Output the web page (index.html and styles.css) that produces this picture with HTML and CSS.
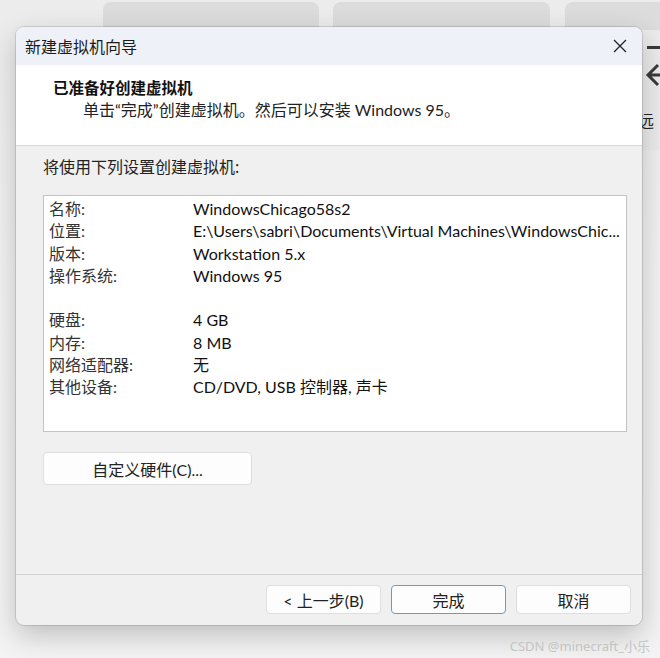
FILE: index.html
```html
<!DOCTYPE html>
<html lang="zh">
<head>
<meta charset="utf-8">
<link rel="stylesheet" href="styles.css">
</head>
<body>
<div class="desktop">
  <div class="bgcard c1"></div>
  <div class="bgcard c2"></div>
  <div class="bgcard c3"></div>
  <div class="bgside">
    <div class="minus"></div>
    <svg class="arrow" width="30" height="30" viewBox="0 0 30 30"><path d="M30 15H6M16 5L6 15l10 10" fill="none" stroke="#3a3a3a" stroke-width="3"/></svg>
    <div class="sidetext">远</div>
  </div>

  <div class="dialog">
    <div class="titlebar">
      <span class="title">新建虚拟机向导</span>
      <svg class="close" width="14" height="14" viewBox="0 0 14 14"><path d="M1 1L13 13M13 1L1 13" stroke="#222" stroke-width="1.3"/></svg>
    </div>
    <div class="header">
      <div class="h-title">已准备好创建虚拟机</div>
      <div class="h-sub">单击“完成”创建虚拟机。然后可以安装 Windows 95。</div>
    </div>
    <div class="content">
      <div class="intro">将使用下列设置创建虚拟机:</div>
      <div class="listbox">
        <div class="row"><span class="k">名称:</span><span class="v">WindowsChicago58s2</span></div>
        <div class="row"><span class="k">位置:</span><span class="v">E:\Users\sabri\Documents\Virtual Machines\WindowsChic...</span></div>
        <div class="row"><span class="k">版本:</span><span class="v">Workstation 5.x</span></div>
        <div class="row"><span class="k">操作系统:</span><span class="v">Windows 95</span></div>
        <div class="row"><span class="k">&nbsp;</span><span class="v"></span></div>
        <div class="row"><span class="k">硬盘:</span><span class="v">4 GB</span></div>
        <div class="row"><span class="k">内存:</span><span class="v">8 MB</span></div>
        <div class="row"><span class="k">网络适配器:</span><span class="v">无</span></div>
        <div class="row"><span class="k">其他设备:</span><span class="v">CD/DVD, USB 控制器, 声卡</span></div>
      </div>
      <div class="btn custom">自定义硬件(C)...</div>
    </div>
    <div class="footer">
      <div class="btn fbtn">&lt; 上一步(B)</div>
      <div class="btn fbtn primary">完成</div>
      <div class="btn fbtn">取消</div>
    </div>
  </div>

  <div class="watermark">CSDN @minecraft_小乐</div>
</div>
</body>
</html>
```
FILE: styles.css
```css
html, body {
  margin: 0;
  padding: 0;
}
body {
  width: 660px;
  height: 658px;
  overflow: hidden;
  background: #f1f1f1;
  font-family: "Noto Sans", "Noto Sans CJK SC", sans-serif;
  color: #1b1b1b;
}
.desktop {
  position: relative;
  width: 660px;
  height: 658px;
  background: linear-gradient(#ececec, #f2f2f2 40%, #f3f3f3);
}
.bgcard {
  position: absolute;
  top: 2px;
  height: 60px;
  border-radius: 8px;
  background: #dcdcdc;
}
.c1 { left: 103px; width: 216px; }
.c2 { left: 333px; width: 217px; }
.c3 { left: 565px; width: 120px; }
.bgside {
  position: absolute;
  left: 642px;
  top: 30px;
  width: 30px;
  height: 120px;
  background: #ebebeb;
}
.minus {
  position: absolute;
  left: 5px;
  top: 16px;
  width: 16px;
  height: 3px;
  background: #3a3a3a;
}
.arrow {
  position: absolute;
  left: 0px;
  top: 30px;
}
.sidetext {
  position: absolute;
  left: -4px;
  top: 78px;
  font-size: 16px;
  font-family: "Noto Sans CJK SC", sans-serif;
  color: #222;
}
.dialog {
  position: absolute;
  left: 16px;
  top: 27px;
  width: 626px;
  height: 598px;
  border-radius: 8px;
  overflow: hidden;
  background: #f0f0f0;
  box-shadow: 0 0 0 1px rgba(0,0,0,0.12), 0 10px 28px rgba(0,0,0,0.22);
  display: flex;
  flex-direction: column;
}
.titlebar {
  height: 38px;
  flex: none;
  background: #eef2f8;
  display: flex;
  align-items: center;
  justify-content: space-between;
  padding: 0 15px 0 9px;
}
.title {
  font-size: 16px;
  font-family: "Noto Sans CJK SC", sans-serif;
  color: #1a1a1a;
}
.close {
  display: block;
}
.header {
  height: 81px;
  flex: none;
  box-sizing: border-box;
  background: #ffffff;
  border-bottom: 1px solid #d9d9d9;
  padding: 11px 0 0 37px;
}
.h-title {
  font-size: 15.5px;
  line-height: 22px;
  font-weight: bold;
  font-family: "Noto Sans CJK SC", sans-serif;
  color: #111;
}
.h-sub {
  font-size: 16px;
  line-height: 24px;
  padding-left: 30px;
  color: #222;
  font-family: "Lato", "Noto Sans CJK SC", sans-serif;
}
.content {
  flex: 1;
  padding: 9px 15px 0 27px;
}
.intro {
  font-size: 16px;
  line-height: 24px;
  color: #222;
}
.listbox {
  margin-top: 16px;
  height: 237px;
  box-sizing: border-box;
  background: #ffffff;
  border: 1px solid #c4c4c4;
  padding: 2px 0 0 5px;
  font-family: "Lato", "Noto Sans CJK SC", sans-serif;
}
.row {
  display: flex;
  font-size: 16px;
  line-height: 22.3px;
  height: 22.3px;
  white-space: nowrap;
}
.k {
  width: 144px;
  flex: none;
  color: #333;
}
.v {
  color: #111;
}
.btn {
  box-sizing: border-box;
  background: #fdfdfd;
  border: 1px solid #dedede;
  border-radius: 4px;
  display: flex;
  align-items: center;
  justify-content: center;
  font-size: 16px;
  color: #222;
  font-family: "Lato", "Noto Sans CJK SC", sans-serif;
}
.custom {
  margin-top: 20px;
  width: 209px;
  height: 33px;
}
.footer {
  height: 51px;
  flex: none;
  box-sizing: border-box;
  border-top: 1px solid #d3d3d3;
  padding: 10px 11px 0 0;
  display: flex;
  justify-content: flex-end;
  align-items: flex-start;
  gap: 10px;
}
.fbtn {
  width: 115px;
  height: 29px;
}
.primary {
  border: 1px solid #6a9ad0;
}
.watermark {
  position: absolute;
  right: 10px;
  top: 636px;
  font-size: 13px;
  color: #c4c4c4;
  font-family: "Noto Sans", "Noto Sans CJK SC", sans-serif;
}
```
